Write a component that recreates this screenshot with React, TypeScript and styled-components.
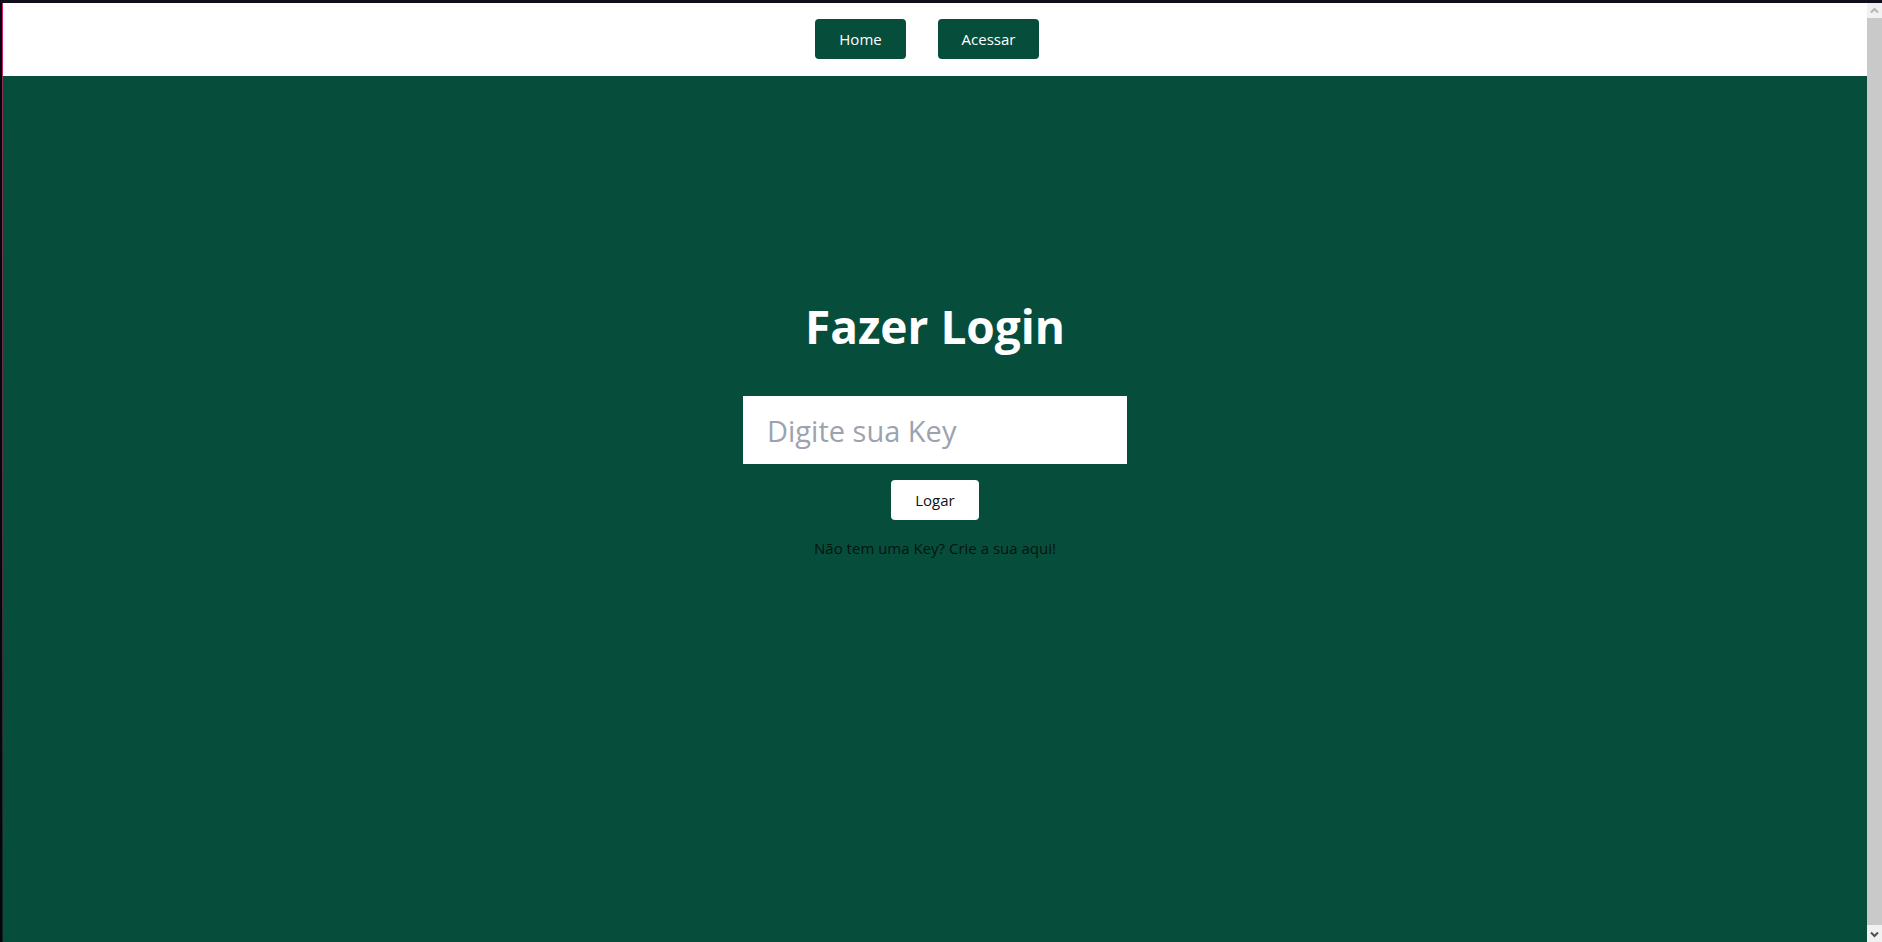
import React from "react";
import styled, { createGlobalStyle } from "styled-components";

const GlobalStyle = createGlobalStyle`
  *, *::before, *::after { box-sizing: border-box; }
  body {
    margin: 0;
    background: #064e3b;
    font-family: "Open Sans", "Noto Sans", sans-serif;
    font-size: 15px;
    line-height: 24px;
  }
`;

const Frame = styled.div`
  display: flex;
  min-height: 100vh;
  border-top: 3px solid #110e1b;
`;

const Edge = styled.div`
  flex: none;
  width: 3px;
  border-left: 2px solid #05060a;
  background: linear-gradient(#d81b72 0, #c22068 73px, #8a3352 73px, #5b3546 50%, #06231c 100%);
`;

const Page = styled.div`
  flex: 1;
  display: flex;
  flex-direction: column;
`;

const Nav = styled.nav`
  display: flex;
  justify-content: center;
  gap: 32px;
  padding: 16px 16px 17px 0;
  background: #fff;
`;

const NavLink = styled.a<{ $width: number }>`
  min-width: ${(p) => p.$width}px;
  padding: 8px 16px;
  border-radius: 4px;
  background: #064e3b;
  color: #fff;
  text-align: center;
  text-decoration: none;
`;

const Main = styled.main`
  flex: 1;
  padding: 218px 16px 0;
  background: #064e3b;
`;

const LoginForm = styled.form`
  display: flex;
  flex-direction: column;
  align-items: center;
  gap: 16px;
`;

const Title = styled.h1`
  margin: 0 0 22px;
  color: #fff;
  font-size: 46px;
  font-weight: 700;
  line-height: 64px;
`;

const KeyInput = styled.input`
  width: 384px;
  max-width: 100%;
  height: 68px;
  padding: 0 24px;
  border: 0;
  border-radius: 0;
  background: #fff;
  color: #111;
  font: inherit;
  font-size: 29px;
  &::placeholder { color: #9ca3af; opacity: 1; }
`;

const Submit = styled.button`
  min-width: 88px;
  padding: 8px 16px;
  border: 0;
  border-radius: 4px;
  background: #fff;
  color: #111;
  font: inherit;
`;

const CreateLink = styled.a`
  color: #04140f;
  text-decoration: none;
`;

const ScrollRail = styled.div`
  flex: none;
  display: flex;
  flex-direction: column;
  width: 15px;
  background: #f1f1f1;
`;

const ScrollArrow = styled.svg`
  display: block;
  width: 15px;
  height: 15px;
  fill: none;
  stroke-width: 2;
`;

const ScrollThumb = styled.div`
  flex: 1;
  margin-bottom: 2px;
  background: #c9c9c9;
`;

export default function App() {
  return (
    <>
      <GlobalStyle />
      <Frame>
        <Edge />
        <Page>
          <Nav>
            <NavLink href="#home" $width={91}>Home</NavLink>
            <NavLink href="#acessar" $width={101}>Acessar</NavLink>
          </Nav>
          <Main>
            <LoginForm onSubmit={(e: React.FormEvent) => e.preventDefault()}>
              <Title>Fazer Login</Title>
              <KeyInput type="text" aria-label="Digite sua Key" placeholder="Digite sua Key" />
              <Submit type="submit">Logar</Submit>
              <CreateLink href="#criar">Não tem uma Key? Crie a sua aqui!</CreateLink>
            </LoginForm>
          </Main>
        </Page>
        <ScrollRail aria-hidden="true">
          <ScrollArrow viewBox="0 0 15 15" stroke="#b5b5b5">
            <path d="M4 9.5 7.5 6 11 9.5" />
          </ScrollArrow>
          <ScrollThumb />
          <ScrollArrow viewBox="0 0 15 15" stroke="#505050">
            <path d="M4 5.5 7.5 9 11 5.5" />
          </ScrollArrow>
        </ScrollRail>
      </Frame>
    </>
  );
}
